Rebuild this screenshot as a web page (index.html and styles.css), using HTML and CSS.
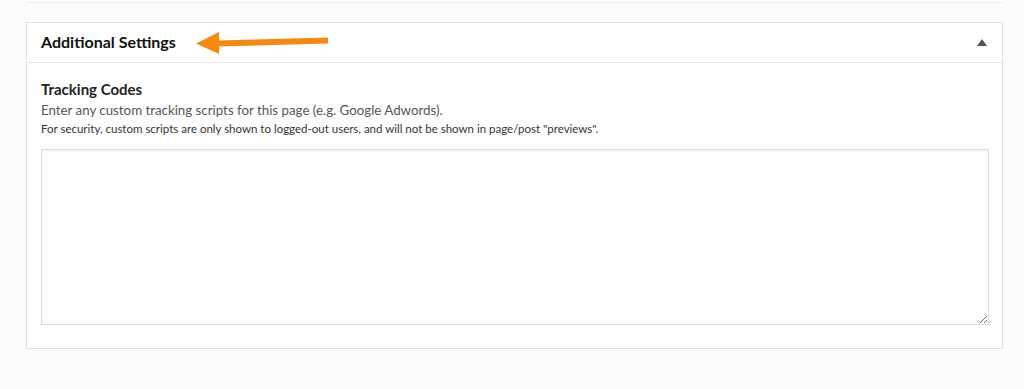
FILE: index.html
```html
<!DOCTYPE html>
<html lang="en">
<head>
    <meta charset="UTF-8">
    <title>Additional Settings</title>
    <link rel="stylesheet" href="styles.css">
</head>
<body>

    <div class="prev-box"></div>

    <div class="panel">
        <div class="panel-header">
            <h3>Additional Settings</h3>
            <span class="toggle"></span>
            <svg class="arrow" width="140" height="26" viewBox="0 0 140 26">
                <path d="M22 10.5 L132 7.5 L132 13.5 L22 16.5 Z" fill="#f7890f"/>
                <path d="M0 13.5 L23 2 L23 24 Z" fill="#f7890f"/>
            </svg>
        </div>
        <div class="panel-body">
            <label class="field-label">Tracking Codes</label>
            <p class="desc">Enter any custom tracking scripts for this page (e.g. Google Adwords).</p>
            <p class="note">For security, custom scripts are only shown to logged-out users, and will not be shown in page/post "previews".</p>
            <textarea class="codes"></textarea>
        </div>
    </div>

</body>
</html>
```

FILE: styles.css
```css
body {
    margin: 0;
    background-color: #fcfcfc;
    font-family: Lato, "Open Sans", Arial, sans-serif;
    color: #23282d;
}
.prev-box {
    margin: 0 21px 0 27px;
    height: 2px;
    background-color: #fff;
    border-bottom: 1px solid #ececec;
}
.panel {
    margin: 19px 21px 0 26px;
    background-color: #fff;
    border: 1px solid #e2e2e2;
    box-shadow: 0 1px 1px rgba(0, 0, 0, 0.04);
}
.panel-header {
    position: relative;
    display: flex;
    align-items: center;
    justify-content: space-between;
    height: 39px;
    padding: 0 15px 0 14px;
    border-bottom: 1px solid #eaeaea;
}
.panel-header h3 {
    margin: -2px 0 0;
    font-size: 16px;
    font-weight: 700;
    color: #111;
}
.toggle {
    width: 0;
    height: 0;
    border-left: 5px solid transparent;
    border-right: 5px solid transparent;
    border-bottom: 7px solid #555;
}
.arrow {
    position: absolute;
    left: 169px;
    top: 7px;
}
.panel-body {
    padding: 17px 13px 23px 14px;
}
.field-label {
    display: block;
    font-size: 15px;
    font-weight: 700;
    color: #222;
    margin-bottom: 4px;
}
.desc {
    margin: 0 0 4px;
    font-size: 13.3px;
    color: #555;
}
.note {
    margin: 0 0 14px;
    font-size: 11.5px;
    color: #333;
}
.codes {
    display: block;
    box-sizing: border-box;
    width: 100%;
    height: 176px;
    margin: 0;
    border: 1px solid #ddd;
    box-shadow: inset 0 1px 2px rgba(0, 0, 0, 0.07);
    background-color: #fff;
}
```
